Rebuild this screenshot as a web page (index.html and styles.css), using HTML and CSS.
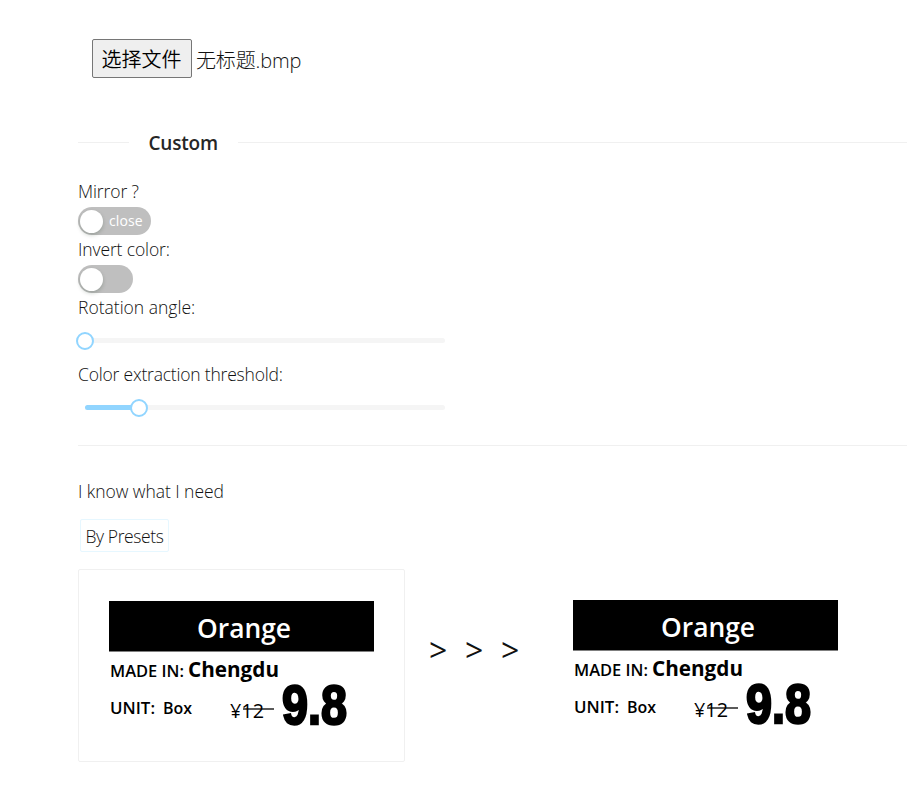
FILE: index.html
```html
<!DOCTYPE html>
<html lang="en">
<head>
<meta charset="utf-8">
<title>Image settings</title>
<link rel="stylesheet" href="styles.css">
</head>
<body>
<main class="page">
  <div class="file"><button class="choose">选择文件</button><span class="filename">无标题.bmp</span></div>
  <div class="divider"><h2>Custom</h2></div>
  <section class="settings">
    <div class="label"><span class="mirror">Mirror ?</span></div>
    <div class="switch wide"><i></i><span>close</span></div>
    <div class="label"><span class="invert">Invert color:</span></div>
    <div class="switch"><i></i></div>
    <div class="label"><span class="rotation">Rotation angle:</span></div>
    <div class="slider"><div class="fill zero"></div><i></i></div>
    <div class="label"><span class="threshold">Color extraction threshold:</span></div>
    <div class="slider"><div class="fill"></div><i></i></div>
  </section>
  <hr>
  <p class="intro">I know what I need</p>
  <button class="presets">By Presets</button>
  <div class="result">
    <div class="card">
      <svg class="tag" width="265" height="130" viewBox="0 0 265 130">
        <defs>
          <g id="price-tag">
            <rect width="265" height="50.5"/>
            <text x="88" y="37" class="title" textLength="94" lengthAdjust="spacingAndGlyphs">Orange</text>
            <text x="1" y="76" class="small" textLength="74" lengthAdjust="spacingAndGlyphs">MADE IN:</text>
            <text x="79" y="76" class="city" textLength="91" lengthAdjust="spacingAndGlyphs">Chengdu</text>
            <text x="1" y="113" class="small" textLength="45" lengthAdjust="spacingAndGlyphs">UNIT:</text>
            <text x="54" y="113" class="small" textLength="29" lengthAdjust="spacingAndGlyphs">Box</text>
            <text x="121" y="117" class="old" textLength="34" lengthAdjust="spacingAndGlyphs">¥12</text>
            <path d="M134 108H165" class="strike"/>
            <text x="173" y="123" class="price" textLength="65" lengthAdjust="spacingAndGlyphs">9.8</text>
          </g>
        </defs>
        <use href="#price-tag"/>
      </svg>
    </div>
    <div class="arrows"><span>&gt;</span><span>&gt;</span><span>&gt;</span></div>
    <svg class="tag output" width="265" height="130" viewBox="0 0 265 130"><use href="#price-tag"/></svg>
  </div>
</main>
</body>
</html>
```
FILE: styles.css
```css
* { box-sizing: border-box; }
body { margin: 0; background: #fff; color: #111; font-family: "Open Sans", "Noto Sans CJK SC", sans-serif; font-size: 17.5px; font-weight: 350; overflow: hidden; }
.page { padding: 39px 0 0 78px; height: 808px; }
.file { display: flex; height: 39px; margin-left: 14px; font-size: 20px; }
.choose { width: 100px; height: 39px; padding: 2px 1px 0 0; border: 1px solid #767676; border-radius: 2px; background: #efefef; color: #000; font: inherit; line-height: 35px; }
.filename { margin-left: 4px; line-height: 43px; letter-spacing: -.15px; font-weight: 300; }
.divider { display: flex; align-items: center; height: 30px; margin-top: 50px; }
.divider::before, .divider::after { content: ""; height: 1px; background: #f0f0f0; margin-bottom: 1px; }
.divider::before { width: 51px; }
.divider::after { flex: 1; }
h2 { margin: 0 20px 0 19.5px; width: 69px; font-size: 19px; line-height: 30px; font-weight: 600; color: #262626; white-space: nowrap; letter-spacing: -.2px; }
.settings { margin-top: 20px; }
.label { height: 29px; line-height: 27px; white-space: nowrap; }
.mirror { letter-spacing: -.1px; }
.invert { letter-spacing: -.12px; }
.rotation { letter-spacing: 0; }
.threshold { letter-spacing: -.2px; }
.switch { position: relative; display: flex; align-items: center; width: 55px; height: 28px; margin-bottom: 1px; padding-left: 2px; border-radius: 14px; background: #bfbfbf; }
.switch.wide { width: 73px; }
.switch i { width: 23px; height: 23px; border-radius: 50%; background: #fff; box-shadow: 0 2px 4px rgba(0, 35, 11, .2); }
.switch span { margin-left: 6px; color: #fff; font-size: 14px; font-weight: 400; line-height: 28px; letter-spacing: .1px; }
.slider { width: 360px; height: 5px; margin: 15px 0 18px 7px; border-radius: 3px; background: #f5f5f5; display: flex; align-items: center; }
.slider .fill { width: 54px; height: 5px; border-radius: 3px; background: #91d5ff; flex: none; }
.slider .fill.zero { width: 0; }
.slider i { width: 18px; height: 18px; margin-left: -9px; flex: none; border: 2px solid #91d5ff; border-radius: 50%; background: #fff; }
hr { height: 1px; margin: 35px 0 0; border: 0; background: #f0f0f0; }
.intro { margin: 31px 0 0; height: 28px; line-height: 28px; letter-spacing: -.05px; }
.presets { display: block; width: 89px; height: 33px; margin: 14px 0 0 2px; padding: 0; border: 1px solid #e6f7ff; border-radius: 2px; background: #fff; color: #111; font: inherit; letter-spacing: -.4px; white-space: nowrap; }
.result { display: flex; margin-top: 17px; }
.card { width: 327px; height: 193px; padding: 31px 30px; border: 1px solid #f0f0f0; border-radius: 2px; }
.tag { display: block; flex: none; overflow: visible; }
.arrows { display: flex; width: 107px; margin: 62px 0 0 24px; font-size: 32px; font-weight: 400; line-height: 38px; }
.arrows span { width: 36px; flex: none; }
.output { margin: 31px 0 0 37px; }
.tag text { font-family: "Open Sans", sans-serif; fill: #000; }
.tag .title { font-size: 27px; font-weight: 600; fill: #fff; }
.tag .small { font-size: 16px; font-weight: 600; }
.tag .city { font-size: 22px; font-weight: 700; }
.tag .old { font-size: 20px; font-weight: 400; }
.tag .strike { fill: none; stroke: #000; stroke-width: 1.3; }
.tag .price { font-family: "Liberation Sans", sans-serif; font-size: 56px; font-weight: 700; stroke: #000; stroke-width: 2.5; }
```
